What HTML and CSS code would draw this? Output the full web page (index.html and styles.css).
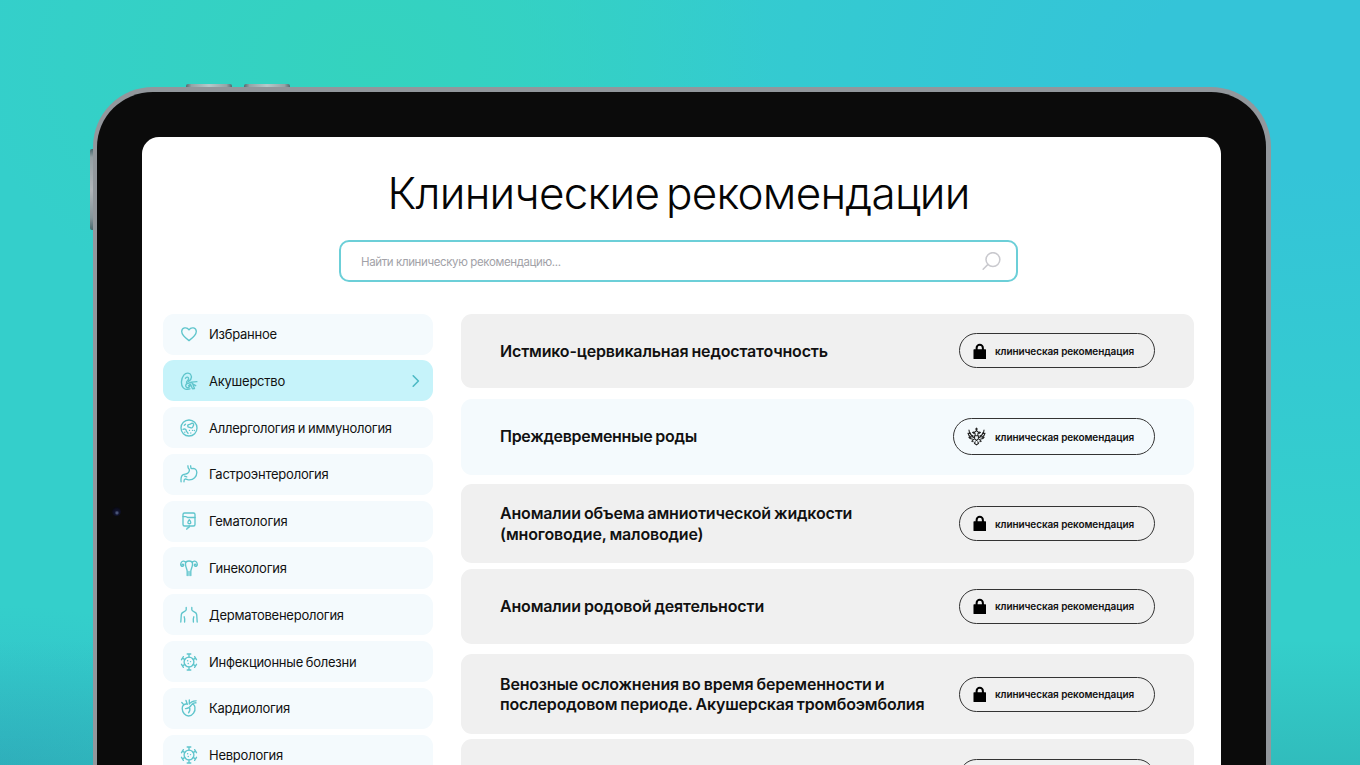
FILE: index.html
```html
<!DOCTYPE html>
<html lang="ru">
<head>
  <meta charset="UTF-8">
  <meta name="viewport" content="width=device-width, initial-scale=1">
  <title>Клинические рекомендации</title>
  <link rel="stylesheet" href="styles.css">
</head>
<body>
  <!-- Icon sprite -->
  <svg class="sprite" aria-hidden="true">
    <symbol id="i-heart" viewBox="0 0 18 18"><path d="M9 15.600C5.500 13 1.700 10.300 1.700 6.500c0-4 5.100-5 7.300-1.600 2.200-3.400 7.300-2.400 7.300 1.600 0 3.800-3.800 6.500-7.300 9.100z"/></symbol>
    <symbol id="i-fetus" viewBox="0 0 18 18"><path d="M8.600 9.400c2.300-1.500 3.300-3.900 2.500-6C10.200.600 6.200.100 3.800 3.100 1.200 6.400.5 12.500 3.100 15.600c1.800 2.100 4.900 1.900 6.800 1.200M5.500 6.300c.6-1.700 3-1.600 3.100.2.100 1.300-1 1.900-1.700 2.900-.9 1.200.4 2.100 1.800 1.800M8.700 11.200l2.600-1 5.600-.6M11.300 10.200l1.700 1.900 2.700 1.600M7.300 11.500c-1.600.5-2.200 2.700-.8 3.800 1.300 1 3 .1 3.400-1.500M8.500 13.700l1.900-1.600 2.100 4.700 2-.3-1.700-4.300"/></symbol>
    <symbol id="i-cell" viewBox="0 0 18 18"><circle cx="9" cy="9" r="8"/><path d="M7.700 7c0-1.200 1-1.700 2-1.700 1.200 0 1.300-1.100 2.400-1.100 1.300 0 2 1.200 1.300 2.500-.4.700-.4 1.500-1.300 2-1.100.5-1.700-.2-2.600-.3C8.500 8.300 7.700 8 7.700 7zM4.300 6.300l1.200-1M3 10.300c1.600-.7 3.200.1 3.200 1.300 0 1.500 1.800 1.200 1.800 3M12.500 11.300v.1M10.800 14v.1M14.400 11.500v.1M4.800 13.200v.1M9.500 11.300v.1"/></symbol>
    <symbol id="i-stomach" viewBox="0 0 18 18"><path d="M8 .8c-.2 1.500.2 2.500 1 3.200.8.900.3 3.200-1.500 4.300-1.200.7-2.800.7-4.200 1.300-1.900.9-2.600 3.400-2.200 7.200M10.700.8c-.1 1.300.3 2.700 1.300 2.900 2.100-.7 4.700.4 4.800 3.500.2 4.800-3.500 7.700-7.300 7.700-2.300 0-3.200-1.200-4.500-.8-1 .4-1.100 1.400-1 2.700M4.600 11.100l2.100.8"/></symbol>
    <symbol id="i-blood" viewBox="0 0 18 18"><rect x="3" y="1" width="12" height="13" rx="1.500"/><path d="M3 4.600h2.800c1 0 1 .9 2 .9H15M9.300 7.800c-2.600 3-1.300 3.900.1 3.900s2.500-.9-.1-3.900zM9.300 14v.8c0 1.400-2.500.4-2.500 2.500"/></symbol>
    <symbol id="i-uterus" viewBox="0 0 18 18"><path d="M7.200 16.600v-4.200C7.200 10 5.300 8.500 5.500 4.500c.1-2 2.200-2.500 3.500-2.500s3.400.5 3.500 2.500c.2 4-1.700 5.500-1.700 7.900v4.200M9 12.500v4.100M5.600 3.500C5 1.800 2.300 1.500 1.400 3.200c-.7 1.300-.8 3.200.1 3.900.9.600 2.600 0 2.100-1.400-.4-.9-1.400-.4-1.400.2M12.400 3.500c.6-1.700 3.300-2 4.200-.3.700 1.300.8 3.200-.1 3.900-.9.600-2.600 0-2.100-1.400.4-.9 1.400-.4 1.400.2"/></symbol>
    <symbol id="i-body" viewBox="0 0 18 18"><path d="M6.200 1.400v2.400C6.200 6.100 1.400 5 1.300 8.800L.8 16M11.800 1.400v2.400c0 2.300 4.800 1.200 4.900 5l.5 7.200M4.200 10.800c.7 1.700.6 3.500.4 5.200M13.800 10.800c-.7 1.700-.6 3.500-.4 5.200"/></symbol>
    <symbol id="i-virus" viewBox="0 0 18 18"><circle cx="9" cy="9" r="4.900"/><path d="M9 4.200V1M7.200 1h3.600M9 13.800V17M7.200 17h3.600M4.900 6.600L2.500 5.200M1.500 6.700l1.900-3.100M13.100 6.600l2.400-1.400M16.500 6.700l-1.900-3.100M4.900 11.400l-2.400 1.400M1.500 11.300l1.900 3.100M13.100 11.400l2.400 1.400M16.500 11.300l-1.900 3.100M7.600 7.700h.1M10.500 8.600h.1M8.200 10.500h.1"/></symbol>
    <symbol id="i-cardio" viewBox="0 0 18 18"><path d="M7.300 5.200C4.800 4.500 2.100 6.300 2.200 9.500c.1 4 3.100 7.500 6.400 7.500 4 0 7.100-4.500 6.300-9-.3-1.600-1.400-2.700-3-2.800M7.300 5.200L6 1.500M9.300 5V1M3.700 5.600L1.800 3.500M9.300 5c1.500-2.500 4-3 6.700-3.200M11.900 5.200c1.100-.9 2.500-1.500 4.200-1.400M5.500 9.600c2.400.1 4.400-1.300 5.800-3.500M9.400 8.300c.8 1.800.6 3.700-.8 5.400"/></symbol>
    <symbol id="i-chevron" viewBox="0 0 8 14"><path d="M1.200 1.800L6.400 7l-5.200 5.200"/></symbol>
    <symbol id="i-search" viewBox="0 0 20 20"><circle cx="11.500" cy="8" r="7.300"/><path d="M6.300 13L1.200 18.200"/></symbol>
    <symbol id="i-lock" viewBox="0 0 14 17"><path fill-rule="evenodd" d="M2.700 6.500V5a4.300 4.300 0 0 1 8.600 0v1.500h1.600a.6.600 0 0 1 .6.600v8.800a.6.600 0 0 1-.6.600H1.100a.6.600 0 0 1-.6-.6V7.100a.6.600 0 0 1 .6-.6zM4.800 6.500h4.400V5a2.200 2.200 0 0 0-4.400 0z"/></symbol>
    <symbol id="i-eagle" viewBox="0 0 20 20"><path d="M10 1v3M8.900 2h2.200M8.500 5l1.500-1.200L11.500 5M8.600 8.700C8.800 6.300 7.600 4.800 5.800 5.700l1.400 1.100M11.400 8.700c-.2-2.400 1-3.900 2.800-3l-1.400 1.100M6.500 9.500C4.300 8.800 2.400 6.500 2.100 3.300M4.300 10.800C2.400 10 1.300 8.300 1 6.500l1.300.4M5.700 12.700c-1.700.1-3.200-.7-3.700-1.900l1.500.1M13.500 9.500c2.200-.7 4.100-3 4.400-6.200M15.700 10.800c1.900-.8 3-2.500 3.300-4.300l-1.300.4M14.300 12.700c1.700.1 3.200-.7 3.700-1.900l-1.500.1M3.500 6.200c.6 2.700 2.500 4.800 4.500 5M16.500 6.200c-.6 2.700-2.500 4.800-4.500 5M8 9.200h4v3.300l-2 1.700-2-1.700zM7 13l-2 2 1.500.6M13 13l2 2-1.500.6M8.700 15.500l-.9 1.600 2.200 1.800 2.200-1.800-.9-1.600"/></symbol>
  </svg>

  <div class="tablet">
    <span class="side-btn side-btn-top first"></span>
    <span class="side-btn side-btn-top second"></span>
    <span class="side-btn side-btn-left"></span>
    <span class="camera"></span>

    <main class="screen">
      <h1>Клинические рекомендации</h1>
      <div class="search">
        <span>Найти клиническую рекомендацию...</span>
        <svg><use href="#i-search"/></svg>
      </div>

      <div class="content">
        <nav class="menu">
          <a class="menu-item"><svg class="icon"><use href="#i-heart"/></svg><span>Избранное</span></a>
          <a class="menu-item active"><svg class="icon"><use href="#i-fetus"/></svg><span>Акушерство</span><svg class="chevron"><use href="#i-chevron"/></svg></a>
          <a class="menu-item"><svg class="icon"><use href="#i-cell"/></svg><span>Аллергология и иммунология</span></a>
          <a class="menu-item"><svg class="icon"><use href="#i-stomach"/></svg><span>Гастроэнтерология</span></a>
          <a class="menu-item"><svg class="icon"><use href="#i-blood"/></svg><span>Гематология</span></a>
          <a class="menu-item"><svg class="icon"><use href="#i-uterus"/></svg><span>Гинекология</span></a>
          <a class="menu-item"><svg class="icon"><use href="#i-body"/></svg><span>Дерматовенерология</span></a>
          <a class="menu-item"><svg class="icon"><use href="#i-virus"/></svg><span>Инфекционные болезни</span></a>
          <a class="menu-item"><svg class="icon"><use href="#i-cardio"/></svg><span>Кардиология</span></a>
          <a class="menu-item"><svg class="icon"><use href="#i-virus"/></svg><span>Неврология</span></a>
        </nav>

        <section class="cards">
          <article class="card">
            <h2>Истмико-цервикальная недостаточность</h2>
            <a class="pill"><svg class="lock"><use href="#i-lock"/></svg><span>клиническая рекомендация</span></a>
          </article>
          <article class="card open">
            <h2>Преждевременные роды</h2>
            <a class="pill"><svg class="eagle"><use href="#i-eagle"/></svg><span>клиническая рекомендация</span></a>
          </article>
          <article class="card tall">
            <h2>Аномалии объема амниотической жидкости<br>(многоводие, маловодие)</h2>
            <a class="pill"><svg class="lock"><use href="#i-lock"/></svg><span>клиническая рекомендация</span></a>
          </article>
          <article class="card">
            <h2>Аномалии родовой деятельности</h2>
            <a class="pill"><svg class="lock"><use href="#i-lock"/></svg><span>клиническая рекомендация</span></a>
          </article>
          <article class="card tall">
            <h2>Венозные осложнения во время беременности и<br>послеродовом периоде. Акушерская тромбоэмболия</h2>
            <a class="pill"><svg class="lock"><use href="#i-lock"/></svg><span>клиническая рекомендация</span></a>
          </article>
          <article class="card">
            <h2></h2>
            <a class="pill"></a>
          </article>
        </section>
      </div>
    </main>
  </div>
</body>
</html>
```
FILE: styles.css
```css
:root {
  --accent: #6ccfd8;
  --icon: #5fc5cc;
  --item: #f4fafd;
  --item-active: #c6f3fa;
  --card: #f0f0f0;
}
* { margin: 0; padding: 0; box-sizing: border-box; }
html { height: 100%; overflow: hidden; }
body {
  height: 765px;
  padding: 87px 89px 0 93px;
  overflow: hidden;
  font-family: Inter, "Noto Sans", sans-serif;
  color: #111;
  background:
    linear-gradient(180deg, transparent 640px, rgba(40,140,150,0.36) 800px),
    radial-gradient(ellipse 300px 160px at 0 765px, rgba(48,176,200,0.6), rgba(48,176,200,0)),
    radial-gradient(ellipse 400px 280px at 370px 60px, #34d3be, rgba(52,211,190,0)),
    radial-gradient(ellipse 800px 500px at 1300px 70px, #34c4d8 20%, rgba(52,196,216,0)),
    #34cfcb;
}
.sprite { position: absolute; width: 0; height: 0; }
svg { flex: none; fill: none; stroke: currentColor; stroke-linecap: round; stroke-linejoin: round; }

/* Tablet frame */
.tablet {
  position: relative;
  height: 100%;
  padding: 45px 45px 0;
  border: 5px solid #92979c;
  border-left-width: 4px;
  border-bottom: 0;
  border-radius: 60px 60px 0 0;
  background: #0b0b0b;
}
.side-btn { position: absolute; background: #a5aeb2; }
.side-btn-top { top: -8px; width: 46px; height: 3px; border-radius: 2px 2px 0 0; background: linear-gradient(90deg, #536b70, #96a3a6 12%, #b5c9ca 50%, #96a3a6 88%, #536b70); }
.side-btn-top.first { left: 89px; }
.side-btn-top.second { left: 147px; }
.side-btn-left { left: -7px; top: 57px; width: 3px; height: 81px; border-radius: 2px 0 0 2px; background: linear-gradient(#47686c, #93a0a4 10%, #b0b6ba 50%, #84959a 85%, #47686c); }
.camera { position: absolute; left: 15px; top: 415px; width: 9px; height: 9px; border-radius: 50%; background: radial-gradient(circle at 55% 65%, #4a5578 0 10%, #10132e 30%, #080810 75%); }

.screen {
  height: 100%;
  padding: 27px 27px 0 21px;
  border-radius: 17px 17px 0 0;
  background: #fff;
  overflow: hidden;
}
h1 { height: 60px; font-size: 44px; line-height: 58px; font-weight: 330; letter-spacing: -0.750px; word-spacing: -5px; text-align: center; white-space: nowrap; color: #050505; }
.search {
  display: flex;
  align-items: center;
  justify-content: space-between;
  width: 679px;
  height: 42px;
  margin: 16px auto 31.500px;
  padding: 1px 15px 0 20px;
  border: 2px solid var(--accent);
  border-radius: 10px;
  font-size: 11.5px;
  letter-spacing: -0.38px;
  color: #a2a2a8;
}
.search svg { width: 19px; height: 19px; color: #c9c9ce; stroke-width: 1.6; }

.content { display: grid; grid-template-columns: 270px 733px; gap: 28px; }

/* Categories */
.menu { display: flex; flex-direction: column; gap: 5.6px; }
.menu-item { display: flex; align-items: center; height: 41.200px; flex: none; padding: 0 13px 0 17px; border-radius: 11px; background: var(--item); font-size: 13px; letter-spacing: -0.24px; word-spacing: -0.6px; white-space: nowrap; }
.menu-item.active { background: var(--item-active); }
.icon { width: 18px; height: 18px; margin-right: 11px; color: var(--icon); stroke-width: 1.35; }
.chevron { width: 8px; height: 14px; margin-left: auto; color: #4cb9c4; stroke-width: 1.6; }

/* Recommendations */
.cards { display: grid; grid-auto-rows: 85.200px; align-items: start; }
.card { display: flex; align-items: center; justify-content: space-between; height: 74.500px; padding: 0 39px; border-radius: 11px; background: var(--card); }
.card.open { height: 76px; background: var(--item); }
.card.tall { height: 79.500px; }
.card h2 { font-size: 16px; line-height: 20.500px; font-weight: 600; letter-spacing: -0.17px; word-spacing: -0.8px; white-space: nowrap; }
.pill { display: flex; flex: none; align-items: center; width: 196px; height: 35px; padding-left: 13px; border: 1px solid #333; border-radius: 18px; font-size: 10px; font-weight: 600; letter-spacing: -0.1px; white-space: nowrap; }
.lock { width: 13.500px; height: 16.500px; margin-right: 8.500px; fill: #000; stroke: none; }
.open .pill { width: 202px; height: 37px; border-radius: 19px; }
.eagle { width: 19px; height: 19px; margin-right: 9px; color: #222; stroke-width: 1.1; }
.open h2 { letter-spacing: -0.3px; }
```
